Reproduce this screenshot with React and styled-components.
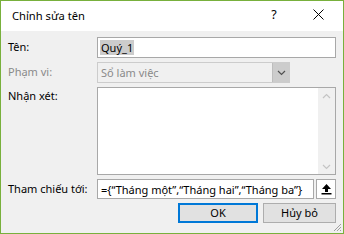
import styled, { createGlobalStyle } from "styled-components";

const GlobalStyle = createGlobalStyle`
  html, body {
    margin: 0;
    padding: 0;
    background: #ffffff;
  }
  * {
    box-sizing: border-box;
  }
`;

const Window = styled.div`
  width: 344px;
  height: 234px;
  border: 1px solid #78b03c;
  background: #f0f0f0;
  font-family: "Noto Sans", "Open Sans", sans-serif;
  font-size: 11px;
  color: #000;
  display: flex;
  flex-direction: column;
  position: relative;
  overflow: hidden;
`;

const TitleBar = styled.div`
  height: 30px;
  background: #ffffff;
  display: flex;
  align-items: center;
  padding: 0 3px 0 11px;
  flex-shrink: 0;
`;

const Title = styled.div`
  flex: 1;
  font-size: 11.2px;
  padding-bottom: 2px;
`;

const TitleButton = styled.div`
  width: 44px;
  height: 30px;
  display: flex;
  align-items: center;
  justify-content: center;
  font-size: 12.5px;
  padding-bottom: 3px;
`;

const Body = styled.div`
  flex: 1;
  padding: 6px 7px 0 7px;
  display: grid;
  grid-template-columns: 89px 1fr;
  grid-template-rows: 21px 21px 88px 20px 20px;
  row-gap: 4px;
`;

const Label = styled.div`
  padding-top: ${(p) => p.$top || 2}px;
  color: ${(p) => (p.$disabled ? "#8a8a8a" : "#000")};
  white-space: nowrap;
`;

const TextBox = styled.div`
  border: 1px solid #a8a8a8;
  background: #ffffff;
  display: flex;
  align-items: center;
  padding-left: 2px;
`;

const Selected = styled.span`
  background: #cccccc;
  padding: 0 1px;
  line-height: 15px;
`;

const Select = styled.div`
  width: 193px;
  border: 1px solid #cccccc;
  background: #f0f0f0;
  display: flex;
  align-items: stretch;
  color: #8a8a8a;
`;

const SelectValue = styled.div`
  flex: 1;
  display: flex;
  align-items: center;
  padding-left: 3px;
`;

const DropButton = styled.div`
  width: 17px;
  background: #cccccc;
  display: flex;
  align-items: center;
  justify-content: center;
  border-left: 1px solid #bdbdbd;
`;

const TextArea = styled.div`
  border: 1px solid #a8a8a8;
  background: #ffffff;
  display: flex;
  justify-content: flex-end;
`;

const ScrollBar = styled.div`
  width: 17px;
  background: #f0f0f0;
  display: flex;
  flex-direction: column;
  justify-content: space-between;
  align-items: center;
  padding: 5px 0 4px;
`;

const RefRow = styled.div`
  display: flex;
  gap: 2px;
`;

const RefField = styled(TextBox)`
  flex: 1;
  padding-left: 3px;
  white-space: nowrap;
  overflow: hidden;
`;

const CollapseButton = styled.div`
  width: 20px;
  border: 1px solid #a8a8a8;
  background: #ffffff;
  display: flex;
  align-items: center;
  justify-content: center;
`;

const ButtonRow = styled.div`
  grid-column: 1 / 3;
  display: flex;
  justify-content: flex-end;
  gap: 5px;
`;

const Button = styled.div`
  width: ${(p) => p.$width}px;
  background: #e1e1e1;
  border: ${(p) => (p.$default ? "2px solid #0078d7" : "1px solid #adadad")};
  display: flex;
  align-items: center;
  justify-content: center;
  padding-bottom: 1px;
`;

const Grip = styled.svg`
  position: absolute;
  right: 1px;
  bottom: 1px;
`;

function Chevron({ up, color = "#606060" }) {
  return (
    <svg width="9" height="6" viewBox="0 0 9 6">
      <path
        d={up ? "M1 5 L4.5 1.5 L8 5" : "M1 1 L4.5 4.5 L8 1"}
        fill="none"
        stroke={color}
        strokeWidth="1.2"
      />
    </svg>
  );
}

export default function App() {
  return (
    <>
      <GlobalStyle />
      <Window>
        <TitleBar>
          <Title>Chỉnh sửa tên</Title>
          <TitleButton>?</TitleButton>
          <TitleButton>
            <svg width="11" height="11" viewBox="0 0 11 11">
              <path d="M0.5 0.5 L10.5 10.5 M10.5 0.5 L0.5 10.5" stroke="#000" strokeWidth="1" />
            </svg>
          </TitleButton>
        </TitleBar>
        <Body>
          <Label>Tên:</Label>
          <TextBox>
            <Selected>Quý_1</Selected>
          </TextBox>

          <Label $disabled>Phạm vi:</Label>
          <Select>
            <SelectValue>Sổ làm việc</SelectValue>
            <DropButton>
              <Chevron color="#505050" />
            </DropButton>
          </Select>

          <Label $top={1}>Nhận xét:</Label>
          <TextArea>
            <ScrollBar>
              <Chevron up color="#c4c4c4" />
              <Chevron color="#c4c4c4" />
            </ScrollBar>
          </TextArea>

          <Label>Tham chiếu tới:</Label>
          <RefRow>
            <RefField>={"{"}“Tháng một”,“Tháng hai”,“Tháng ba”{"}"}</RefField>
            <CollapseButton>
              <svg width="11" height="12" viewBox="0 0 11 12">
                <path d="M5.5 1 L10 6 L7 6 L7 9 L4 9 L4 6 L1 6 Z" fill="#000" />
                <rect x="0.5" y="10" width="10" height="1.5" fill="#000" />
              </svg>
            </CollapseButton>
          </RefRow>

          <ButtonRow>
            <Button $width={80} $default>OK</Button>
            <Button $width={73}>Hủy bỏ</Button>
          </ButtonRow>
        </Body>
        <Grip width="10" height="10" viewBox="0 0 10 10">
          <path d="M9 2 L2 9 M9 5 L5 9 M9 8 L8 9" stroke="#a0a0a0" strokeWidth="1" />
        </Grip>
      </Window>
    </>
  );
}
